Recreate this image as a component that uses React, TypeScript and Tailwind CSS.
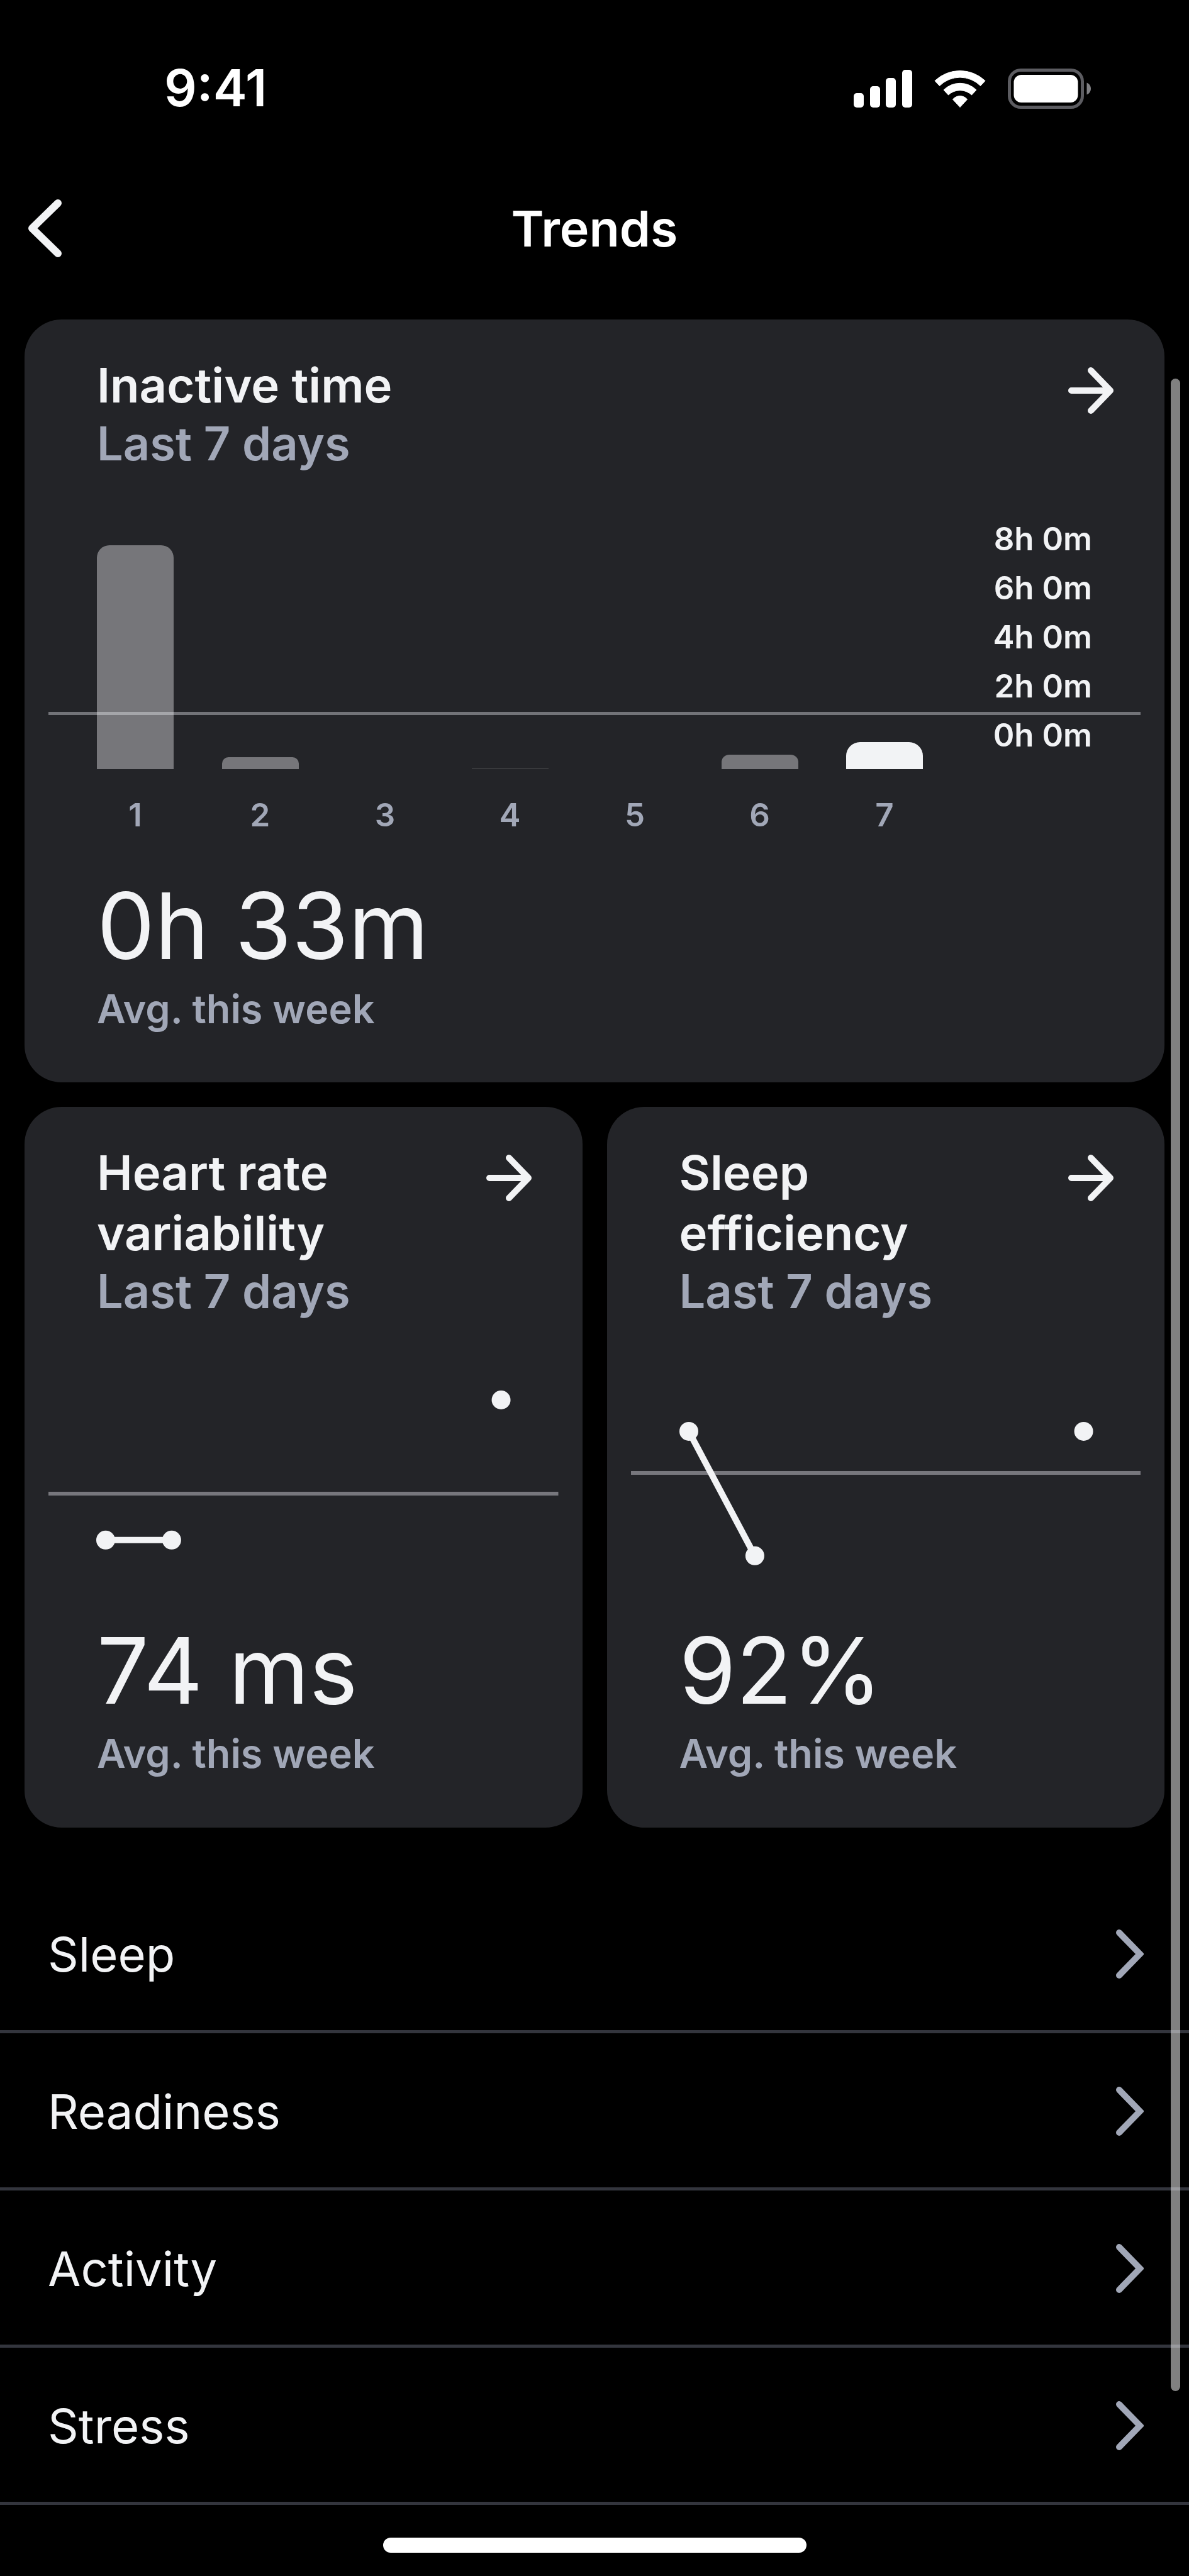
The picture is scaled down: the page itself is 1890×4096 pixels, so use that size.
import React from 'react';

interface DayBar {
  day: number;
  height: number;
  style: string;
}

interface Point {
  x: number;
  y: number;
}

interface LineCardProps {
  title: string;
  value: string;
  points: Point[];
  segment: [Point, Point];
  average: number;
}

const DAYS: DayBar[] = [
  { day: 1, height: 356, style: 'rounded-t-[20px] bg-[#f2f3f5]/40' },
  { day: 2, height: 19, style: 'rounded-t-[10px] bg-[#f2f3f5]/40' },
  { day: 3, height: 0, style: '' },
  { day: 4, height: 2, style: 'bg-[#f2f3f5]/10' },
  { day: 5, height: 0, style: '' },
  { day: 6, height: 23, style: 'rounded-t-[12px] bg-[#f2f3f5]/40' },
  { day: 7, height: 43, style: 'rounded-t-[22px] bg-[#f2f3f5]' },
];

const HOURS = ['8h 0m', '6h 0m', '4h 0m', '2h 0m', '0h 0m'];

const CATEGORIES = ['Sleep', 'Readiness', 'Activity', 'Stress'];

const HRV_POINTS: Point[] = [{ x: 91, y: 244 }, { x: 196, y: 244 }, { x: 720, y: 21 }];
const EFFICIENCY_POINTS: Point[] = [{ x: 92, y: 71 }, { x: 197, y: 269 }, { x: 720, y: 71 }];

const StatusBar = () => (
  <div className="flex items-center justify-between pt-[100px] pl-[261px] pr-[156px] text-white">
    <span className="text-[81px] leading-[81px] font-semibold">9:41</span>
    <div className="flex items-center gap-[35px]">
      <svg width="93" height="60" viewBox="0 0 93 60" fill="currentColor" aria-hidden="true">
        <rect x="0" y="37" width="16" height="23" rx="5" />
        <rect x="26" y="26" width="16" height="34" rx="5" />
        <rect x="51" y="13" width="16" height="47" rx="5" />
        <rect x="77" y="0" width="16" height="60" rx="5" />
      </svg>
      <svg width="82" height="60" viewBox="0 0 82 60" fill="currentColor" stroke="currentColor" strokeLinejoin="round" aria-hidden="true">
        <path d="M1 17.5A58 58 0 0 1 81 17.5L73.5 25.5A46 46 0 0 0 8.5 25.5Z" />
        <path d="M15 32A37 37 0 0 1 67 32L59.5 40A27 27 0 0 0 22.5 40Z" />
        <path d="M29.5 47A15 15 0 0 1 52.5 47L41 59.5Z" />
      </svg>
      <svg width="132" height="64" viewBox="0 0 132 64" aria-hidden="true">
        <rect x="2.5" y="2.5" width="116" height="59" rx="18" fill="none" stroke="#5c5c61" strokeWidth="5" />
        <rect x="9.5" y="10" width="102" height="44" rx="12" fill="currentColor" />
        <path d="M125.5 22.5C129.5 24 132 28 132 32S129.5 40 125.5 41.5Z" fill="#808084" />
      </svg>
    </div>
  </div>
);

const CardHeader = ({ title }: { title: string }) => (
  <div className="flex items-start justify-between gap-20 pt-14 pl-[115px] pr-[80px]">
    <div>
      <h2 className="text-[76px] leading-[96px] font-semibold">{title}</h2>
      <p className="text-[74px] leading-[90px] font-semibold text-[#a1a7b7]">Last 7 days</p>
    </div>
    <button type="button" aria-label={`Open ${title}`} className="mt-5 shrink-0 cursor-pointer">
      <svg width="74" height="74" viewBox="0 0 74 74" fill="none" stroke="currentColor" strokeWidth="10" strokeLinecap="round" strokeLinejoin="round">
        <path d="M6 37H68M37 5L68 37L37 69" />
      </svg>
    </button>
  </div>
);

const CardValue = ({ value }: { value: string }) => (
  <div className="px-[115px]">
    <p className="text-[146px] leading-[160px] font-normal whitespace-nowrap">{value}</p>
    <p className="mt-3 text-[63px] leading-[80px] font-semibold text-[#a1a7b7]">Avg. this week</p>
  </div>
);

const InactiveCard = () => (
  <section className="rounded-[59px] bg-[#232428] pb-[77px]">
    <CardHeader title="Inactive time" />

    <div className="relative mx-[115px] mt-[68px] flex h-[405px]">
      {/* Weekly average */}
      <div className="absolute -left-[77px] -right-[77px] bottom-[86px] h-[5px] bg-[#727378]" />
      <div className="relative flex flex-1 items-end justify-between">
        {DAYS.map((item) => (
          <div key={item.day} className={`w-[122px] ${item.style}`} style={{ height: item.height }} />
        ))}
      </div>
      <ul className="relative w-[269px] text-right text-[51px] leading-[78px] font-semibold">
        {HOURS.map((hour) => (
          <li key={hour}>{hour}</li>
        ))}
      </ul>
    </div>

    <div className="mx-[115px] mt-[43px] mb-[66px] flex justify-between pr-[269px] text-[51px] leading-[60px] font-semibold text-[#a1a7b7]">
      {DAYS.map((item) => (
        <span key={item.day} className="w-[122px] text-center">{item.day}</span>
      ))}
    </div>

    <CardValue value="0h 33m" />
  </section>
);

const LineCard: React.FC<LineCardProps> = ({ title, value, points, segment, average }) => (
  <section className="min-w-0 flex-1 rounded-[59px] bg-[#232428] pb-[78px]">
    <CardHeader title={title} />
    <div className="mx-[38px] mt-[107px] mb-[81px]">
      <svg viewBox="0 0 811 290" className="w-full" role="img" aria-label={`${title}, last 7 days`}>
        <path d={`M0 ${average}H811`} stroke="#77777d" strokeWidth="6" />
        <path d={`M${segment[0].x} ${segment[0].y}L${segment[1].x} ${segment[1].y}`} stroke="#f2f3f5" strokeWidth="10" />
        {points.map((point) => (
          <circle key={point.x} cx={point.x} cy={point.y} r="15" fill="#f2f3f5" />
        ))}
      </svg>
    </div>
    <CardValue value={value} />
  </section>
);

const App = () => {
  return (
    <div className="flex min-h-screen flex-col bg-black font-['Inter',sans-serif] text-[#f2f3f5]">
      <StatusBar />

      <header className="grid grid-cols-[1fr_auto_1fr] items-center px-11 pt-[132px] pb-[95px]">
        <button type="button" aria-label="Back" className="w-fit cursor-pointer">
          <svg width="54" height="92" viewBox="0 0 54 92" fill="none" stroke="currentColor" strokeWidth="12" strokeLinecap="round" strokeLinejoin="round">
            <path d="M48 6L7 46L48 86" />
          </svg>
        </button>
        <h1 className="text-[79px] leading-[100px] font-semibold text-white">Trends</h1>
      </header>

      <main className="relative">
        <div className="flex flex-col gap-[39px] px-[39px]">
          <InactiveCard />
          <div className="flex gap-[39px]">
            <LineCard
              title="Heart rate variability"
              value="74 ms"
              points={HRV_POINTS}
              segment={[HRV_POINTS[0], HRV_POINTS[1]]}
              average={170}
            />
            <LineCard
              title="Sleep efficiency"
              value="92%"
              points={EFFICIENCY_POINTS}
              segment={[EFFICIENCY_POINTS[0], EFFICIENCY_POINTS[1]]}
              average={137}
            />
          </div>
        </div>

        <nav className="mt-[77px]">
          {CATEGORIES.map((category) => (
            <a
              key={category}
              href="#"
              className="flex h-[250px] items-center justify-between border-b-[5px] border-[#33353d] pt-1 pl-[76px] pr-[72px] text-[76px] leading-[96px]"
            >
              {category}
              <svg width="44" height="78" viewBox="0 0 44 78" fill="none" stroke="#a1a7b7" strokeWidth="10" strokeLinecap="round" aria-hidden="true">
                <path d="M5 5L38 39L5 73" />
              </svg>
            </a>
          ))}
        </nav>

        {/* Scroll indicator */}
        <div className="absolute top-[94px] right-[14px] bottom-[181px] w-[15px] rounded-full bg-white/50" />
      </main>

      <div className="mx-auto mt-[52px] mb-[37px] h-6 w-[673px] rounded-full bg-white" />
    </div>
  );
};

export default App;
